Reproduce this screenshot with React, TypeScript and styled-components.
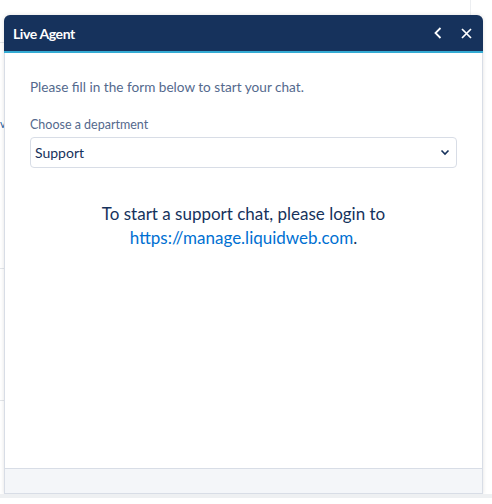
import React from "react";
import styled, { createGlobalStyle } from "styled-components";

const GlobalStyle = createGlobalStyle`
  html, body {
    margin: 0;
    padding: 0;
    background: #ffffff;
    font-family: Lato, "Open Sans", Arial, sans-serif;
  }
`;

const Page = styled.div`
  position: relative;
  width: 492px;
  height: 504px;
  overflow: hidden;
  padding: 15px 0 0 4px;
  box-sizing: border-box;
`;

// faint bits of the page that lies behind the chat window
const BackLine = styled.div<{ $top: number }>`
  position: absolute;
  left: 0;
  top: ${(p) => p.$top}px;
  width: 8px;
  height: 1px;
  background: #e3e6ea;
`;

const BackRule = styled.div`
  position: absolute;
  left: 470px;
  top: 0;
  width: 1px;
  height: 15px;
  background: #eceef1;
`;

const BackGlyph = styled.span`
  position: absolute;
  left: 0;
  top: 117px;
  font-size: 11px;
  color: #1b5f9e;
`;

const ChatWindow = styled.div`
  position: relative;
  width: 479px;
  height: 479px;
  display: flex;
  flex-direction: column;
  background: #ffffff;
  border: 1px solid #d8dde6;
  border-top: none;
  border-radius: 6px 6px 0 0;
  box-shadow: 0 0 4px rgba(0, 0, 0, 0.12);
  box-sizing: border-box;
`;

const Header = styled.header`
  height: 36px;
  display: flex;
  align-items: center;
  justify-content: space-between;
  padding: 0 10px 0 9px;
  margin: 0 -1px;
  background: #16325c;
  border-bottom: 2px solid #34abd3;
  border-radius: 6px 6px 0 0;
  color: #ffffff;
`;

const Title = styled.h1`
  margin: 0;
  font-size: 14px;
  font-weight: 700;
  letter-spacing: -0.4px;
`;

const HeaderActions = styled.div`
  display: flex;
  align-items: center;
  gap: 14px;
`;

const IconButton = styled.button`
  width: 14px;
  height: 14px;
  padding: 0;
  border: none;
  background: none;
  color: #ffffff;
  display: flex;
  align-items: center;
  justify-content: center;
  cursor: pointer;
`;

const Body = styled.main`
  flex: 1;
  padding: 26px 25px 0 25px;
  color: #16325c;
`;

const Intro = styled.p`
  margin: 0 0 22px;
  font-size: 13.6px;
  color: #54698d;
`;

const Label = styled.label`
  display: block;
  margin-bottom: 5px;
  font-size: 12.5px;
  color: #54698d;
`;

const SelectBox = styled.div`
  height: 31px;
  display: flex;
  align-items: center;
  justify-content: space-between;
  padding: 0 6px 0 4px;
  border: 1px solid #d8dde6;
  border-radius: 4px;
  box-sizing: border-box;
  font-size: 14px;
  color: #16325c;
`;

const Notice = styled.p`
  margin: 34px 0 0;
  text-align: center;
  font-size: 17px;
  line-height: 24px;
  color: #16325c;
`;

const Link = styled.a`
  color: #0070d2;
  text-decoration: none;
`;

const Footer = styled.footer`
  height: 24px;
  background: #f4f6f9;
  border-top: 1px solid #d8dde6;
`;

const BottomBand = styled.div`
  position: absolute;
  left: 0;
  right: 0;
  top: 494px;
  height: 4px;
  background: #eef0f2;
`;

const App = () => {
  return (
    <>
      <GlobalStyle />
      <Page>
        <BackRule />
        <BackLine $top={42} />
        <BackLine $top={268} />
        <BackLine $top={400} />
        <BackGlyph>v</BackGlyph>
        <ChatWindow>
          <Header>
            <Title>Live Agent</Title>
            <HeaderActions>
              <IconButton aria-label="Minimize">
                <svg width="8" height="12" viewBox="0 0 8 12">
                  <path d="M6.5 1 L1.5 6 L6.5 11" fill="none" stroke="#fff" strokeWidth="1.8" />
                </svg>
              </IconButton>
              <IconButton aria-label="Close">
                <svg width="11" height="11" viewBox="0 0 11 11">
                  <path d="M1 1 L10 10 M10 1 L1 10" fill="none" stroke="#fff" strokeWidth="1.7" />
                </svg>
              </IconButton>
            </HeaderActions>
          </Header>
          <Body>
            <Intro>Please fill in the form below to start your chat.</Intro>
            <Label>Choose a department</Label>
            <SelectBox>
              <span>Support</span>
              <svg width="10" height="7" viewBox="0 0 10 7">
                <path d="M1.5 1.5 L5 5 L8.5 1.5" fill="none" stroke="#16325c" strokeWidth="1.6" />
              </svg>
            </SelectBox>
            <Notice>
              To start a support chat, please login to
              <br />
              <Link href="#">https://manage.liquidweb.com</Link>.
            </Notice>
          </Body>
          <Footer />
        </ChatWindow>
        <BottomBand />
      </Page>
    </>
  );
};

export default App;
